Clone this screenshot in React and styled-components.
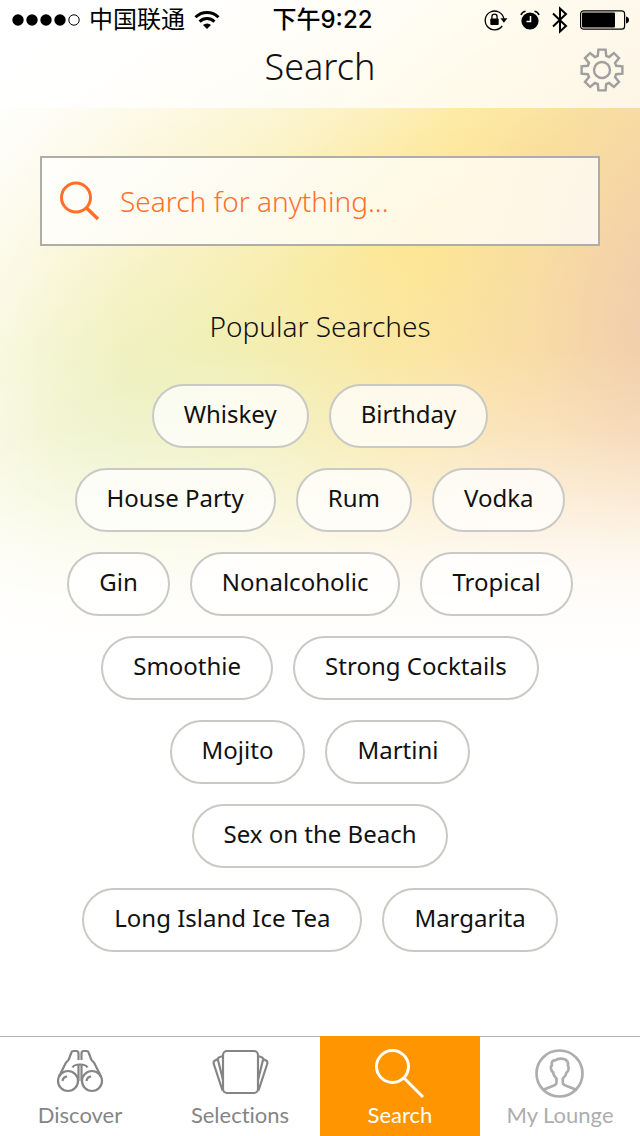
import styled, { createGlobalStyle } from 'styled-components'

const GlobalStyle = createGlobalStyle`
    *{
        box-sizing:border-box;
    }
    body{
        margin:0;
    }
`
const Page = styled.div`
    min-height:100vh;
    display:flex;
    flex-direction:column;
    color:#111;
    font-family:"Noto Sans", "Noto Sans CJK SC", sans-serif;
    background-color:#fff;
    background-image:
        linear-gradient(150deg, #fff 40px, rgba(255,255,255,0.85) 120px, rgba(255,255,255,0.5) 230px, rgba(255,255,255,0.2) 320px, rgba(255,255,255,0) 400px),
        linear-gradient(180deg, rgba(255,255,255,0) 350px, rgba(255,255,255,0.18) 430px, rgba(255,255,255,0.45) 490px, rgba(255,255,255,0.76) 550px, rgba(255,255,255,0.93) 600px, #fff 660px),
        linear-gradient(90deg, rgba(255,255,255,0.4) 0, rgba(255,255,255,0.15) 60px, rgba(255,255,255,0) 130px),
        radial-gradient(ellipse 260px 360px at 700px 330px, rgba(240,202,180,1) 0%, rgba(242,205,172,0.75) 30%, rgba(246,212,165,0.3) 65%, rgba(250,218,160,0) 100%),
        radial-gradient(ellipse 400px 300px at 110px 450px, #ebf1c2 0%, rgba(237,241,190,0.8) 35%, rgba(243,239,180,0.35) 70%, rgba(248,236,170,0) 100%),
        radial-gradient(ellipse 360px 300px at 520px 520px, rgba(250,222,190,0.8) 0%, rgba(251,225,180,0.4) 50%, rgba(252,228,150,0) 100%),
        linear-gradient(105deg, #f6f0bc 0, #f9eca8 300px, #fde692 470px, #f9e09e 600px, #f4d8a4 760px);
`
const Header = styled.header`
    height:108px;
    background-color:rgba(255,255,255,0.75);
`
const StatusBar = styled.div`
    height:40px;
    padding:0 11px 0 12px;
    display:grid;
    grid-template-columns:1fr auto 1fr;
    align-items:center;
    color:#000;
    font-family:Inter, "Noto Sans CJK SC", sans-serif;
    font-size:24px;
    line-height:40px;
`
const StatusGroup = styled.div`
    display:flex;
    align-items:center;
    gap:${props => props.$end ? "12px" : "9px"};
    justify-content:${props => props.$end ? "flex-end" : "flex-start"};
`
const Time = styled.span`
    padding-left:4px;
    font-weight:500;
`
const NavBar = styled.div`
    height:60px;
    padding:0 16px;
    display:grid;
    grid-template-columns:1fr auto 1fr;
    align-items:center;
`
const Title = styled.h1`
    margin:0;
    grid-column:2;
    align-self:start;
    font-size:36px;
    font-weight:300;
    line-height:54px;
`
const IconButton = styled.button`
    justify-self:end;
    display:flex;
    padding:0;
    border:0;
    background:none;
    color:#9f9f9f;
`
const Main = styled.main`
    flex:1;
    padding:48px 40px;
`
const SearchBox = styled.label`
    height:90px;
    padding:0 16px;
    display:flex;
    align-items:center;
    gap:20px;
    color:#ff6f2c;
    border:2px solid #aeaea6;
    background-color:rgba(255,255,255,0.75);
`
const SearchInput = styled.input`
    flex:1;
    min-width:0;
    padding:0;
    border:0;
    outline:0;
    background:none;
    color:inherit;
    font-family:inherit;
    font-size:28px;
    font-weight:300;

    &::placeholder{
        color:inherit;
        opacity:1;
    }
`
const SubTitle = styled.h2`
    margin:60px 0 38px;
    font-size:28px;
    font-weight:300;
    line-height:40px;
    text-align:center;
`
const Tags = styled.div`
    max-width:520px;
    margin:0 auto;
    display:flex;
    flex-wrap:wrap;
    justify-content:center;
    gap:20px;
`
const Tag = styled.button`
    height:64px;
    padding:0 30px 6px;
    border:2px solid #c9c9c6;
    border-radius:32px;
    background-color:rgba(255,255,255,0.75);
    color:#111;
    font-family:inherit;
    font-size:24px;
`
const TabBar = styled.nav`
    display:grid;
    grid-template-columns:repeat(4, 1fr);
`
const Tab = styled.a`
    height:100px;
    padding-top:12px;
    display:flex;
    flex-direction:column;
    align-items:center;
    gap:2px;
    border-top:1px solid ${props => props.$active ? "#ff9500" : "#b2b2b2"};
    background-color:${props => props.$active ? "#ff9500" : "#fff"};
    color:${props => props.$active ? "#fff" : props.$muted ? "#adadad" : "#858585"};
    font-family:Lato, sans-serif;
    font-size:22px;
    font-variant-ligatures:none;
    line-height:28px;
    text-decoration:none;
`

const Signal = () => (
    <svg width="68" height="12" viewBox="0 0 68 12" aria-hidden="true">
        {[6, 20, 34, 48].map(x => <circle key={x} cx={x} cy="6" r="5.7" />)}
        <circle cx="62" cy="6" r="5.2" fill="none" stroke="#000" />
    </svg>
)

const Wifi = () => (
    <svg width="26" height="20" viewBox="0 0 26 20" fill="none" stroke="#000" strokeWidth="3" aria-hidden="true">
        <path d="M1.5 7.2a16.3 16.3 0 0 1 23 0" />
        <path d="M5.6 11.6a10.5 10.5 0 0 1 14.8 0" />
        <path d="M13 19l-4-4a5.8 5.8 0 0 1 8 0z" fill="#000" stroke="none" />
    </svg>
)

const Lock = () => (
    <svg width="24" height="22" viewBox="0 0 24 22" fill="none" stroke="#000" strokeWidth="1.3" aria-hidden="true">
        <path d="M18.2 17A9.4 9.4 0 1 1 19.8 9.5" />
        <path d="M16.4 9.3h7l-3.5 4.4z" fill="#000" stroke="none" />
        <rect x="6.3" y="9.5" width="8.4" height="6.5" rx="1" fill="#000" stroke="none" />
        <path d="M7.9 10V7.8a2.600 2.600 0 0 1 5.200 0V10" />
    </svg>
)

const Alarm = () => (
    <svg width="20" height="20" viewBox="0 0 20 20" aria-hidden="true">
        <circle cx="10" cy="11" r="8.6" />
        <path d="M1 5Q2 2 5.5 1.3M19 5Q18 2 14.5 1.3" fill="none" stroke="#000" strokeWidth="1.6" />
        <path d="M10.5 6v5.5H6.5" fill="none" stroke="#fff" strokeWidth="1.5" />
    </svg>
)

const Bluetooth = () => (
    <svg width="16" height="28" viewBox="0 0 16 28" fill="none" stroke="#000" strokeWidth="2" aria-hidden="true">
        <path d="M1 7.5l13 12.500-6 5.500V2.500l6 5.500L1 20.500" />
    </svg>
)

const Battery = () => (
    <svg width="49" height="20" viewBox="0 0 49 20" aria-hidden="true">
        <rect x="0.6" y="0.8" width="44" height="18.4" rx="3" fill="none" stroke="#000" strokeWidth="1.2" />
        <rect x="2" y="2.5" width="33" height="15" rx="1" />
        <path d="M46 6.5q3 .8 3 3.500t-3 3.500z" />
    </svg>
)

// eight teeth, one every 45 degrees
const gearPoints = [0, 45, 90, 135, 180, 225, 270, 315].flatMap(deg => {
    const a = deg * Math.PI / 180
    return [[-4.2, -14.2], [-3.6, -20.4], [3.6, -20.4], [4.2, -14.2]].map(([x, y]) =>
        `${(x * Math.cos(a) - y * Math.sin(a)).toFixed(1)},${(x * Math.sin(a) + y * Math.cos(a)).toFixed(1)}`
    )
}).join(" ")

const Gear = () => (
    <svg width="44" height="44" viewBox="-22 -22 44 44" fill="none" stroke="currentColor" strokeWidth="2.4" aria-hidden="true">
        <circle r="8" />
        <polygon points={gearPoints} />
    </svg>
)

const Magnifier = () => (
    <svg width="42" height="42" viewBox="0 0 42 42" fill="none" stroke="currentColor" strokeWidth="3" aria-hidden="true">
        <circle cx="18" cy="17.5" r="14.5" />
        <path d="M28 27.5l12 11.5" strokeWidth="3.5" />
    </svg>
)

const TabIcon = ({ children, width = 2.2 }) => (
    <svg width="60" height="50" viewBox="0 0 60 50" fill="none" stroke="currentColor" strokeWidth={width} strokeLinejoin="round" aria-hidden="true">
        {children}
    </svg>
)

const Barrel = () => (
    <>
        <circle cx="18" cy="32" r="10" />
        <path d="M28.5 11V4.500Q28.500 2 26 2H23.500Q21.500 2 21 4.500L19 10Q18.500 11.500 16 13.500L9 27.500" />
        <path d="M28.5 16V32" />
        <path d="M22.5 18.500Q24 15.500 30 15.500" />
    </>
)

const SideCards = () => (
    <>
        <path d="M12.5 41.500L3.800 15Q3 12.500 5 11.500L8 10" />
        <path d="M13 31L8 11Q7.500 8.500 10 8L13 7" />
    </>
)

const tags = [
    "Whiskey", "Birthday", "House Party", "Rum", "Vodka", "Gin", "Nonalcoholic", "Tropical",
    "Smoothie", "Strong Cocktails", "Mojito", "Martini", "Sex on the Beach", "Long Island Ice Tea", "Margarita",
]

const App = () => {
  return (
    <Page>
        <GlobalStyle />
        <Header>
            <StatusBar>
                <StatusGroup>
                    <Signal />
                    <span>中国联通</span>
                    <Wifi />
                </StatusGroup>
                <Time>下午9:22</Time>
                <StatusGroup $end>
                    <Lock />
                    <Alarm />
                    <Bluetooth />
                    <Battery />
                </StatusGroup>
            </StatusBar>
            <NavBar>
                <Title>Search</Title>
                <IconButton aria-label="Settings"><Gear /></IconButton>
            </NavBar>
        </Header>
        <Main>
            <SearchBox>
                <Magnifier />
                <SearchInput type="text" aria-label="Search" placeholder="Search for anything..." />
            </SearchBox>
            <SubTitle>Popular Searches</SubTitle>
            <Tags>
                {tags.map(tag => <Tag key={tag}>{tag}</Tag>)}
            </Tags>
        </Main>
        <TabBar>
            <Tab href="#discover">
                <TabIcon>
                    <Barrel />
                    <g transform="translate(60 0) scale(-1 1)"><Barrel /></g>
                    <path d="M12.5 32Q13 28 17 27.300M36.500 32Q37 28 41 27.300" />
                </TabIcon>
                Discover
            </Tab>
            <Tab href="#selections">
                <TabIcon>
                    <rect x="13" y="2" width="35" height="42" rx="4" />
                    <SideCards />
                    <g transform="translate(61 0) scale(-1 1)"><SideCards /></g>
                </TabIcon>
                Selections
            </Tab>
            <Tab href="#search" $active>
                <TabIcon width={3}>
                    <circle cx="22.5" cy="17.5" r="16" />
                    <path d="M34 29l19 19" />
                </TabIcon>
                Search
            </Tab>
            <Tab href="#lounge" $muted>
                <TabIcon width={2.7}>
                    <circle cx="29.5" cy="24.5" r="23" />
                    <path d="M12.500 41L24 36.500Q26.500 35.500 26.500 33.500V29.500Q23.500 27 23 23Q21.500 22.500 21 19.500Q20.500 17 22 16.500Q21 11 25 11.500Q28 9 33 9.800Q39 11 38 17Q39 18 38.500 20.500Q38 23 36.500 23.500Q36 27 32.800 29.500V33.500Q32.800 35.500 35.500 36.500L47 41" />
                </TabIcon>
                My Lounge
            </Tab>
        </TabBar>
    </Page>
  )
}

export default App;
